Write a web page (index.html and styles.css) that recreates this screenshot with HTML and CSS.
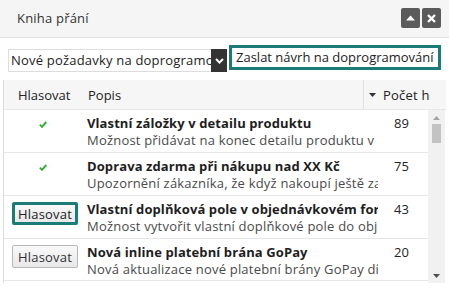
FILE: index.html
```html
<!DOCTYPE html>
<html lang="cs">

<head>
    <meta charset="UTF-8">
    <title>Kniha přání</title>
    <link rel="stylesheet" href="styles.css">
</head>

<body>
    <div class="titlebar">
        <span class="title">Kniha přání</span>
        <div class="tools">
            <span class="tool">
                <svg width="9" height="6" viewBox="0 0 9 6"><path d="M0 5.5 L4.5 0.5 L9 5.5 Z" fill="#fff"/></svg>
            </span>
            <span class="tool">
                <svg width="9" height="9" viewBox="0 0 9 9"><path d="M1 1 L8 8 M8 1 L1 8" stroke="#fff" stroke-width="2.4"/></svg>
            </span>
        </div>
    </div>

    <div class="filters">
        <div class="select">
            <span class="select-text">Nové požadavky na doprogramování</span>
            <span class="select-arrow">
                <svg width="9" height="6" viewBox="0 0 9 6"><path d="M1 1 L4.5 4.5 L8 1" stroke="#fff" stroke-width="2" fill="none"/></svg>
            </span>
        </div>
        <div class="propose">Zaslat návrh na doprogramování</div>
    </div>

    <div class="grid">
        <div class="grid-head">
            <div class="hcol col-vote">Hlasovat</div>
            <div class="hcol col-desc">Popis</div>
            <div class="hcol col-count">
                <svg width="7" height="4" viewBox="0 0 7 4"><path d="M0 0 L7 0 L3.5 4 Z" fill="#333"/></svg>
                <span class="hcount">Počet hlasů</span>
            </div>
        </div>
        <div class="grid-body">
            <div class="rows">
                <div class="row">
                    <div class="cell col-vote">
                        <svg class="check" width="8" height="7" viewBox="0 0 8 7"><path d="M0.8 3.6 L3 5.8 L7.2 1" stroke="#2fae2f" stroke-width="1.9" fill="none"/></svg>
                    </div>
                    <div class="cell col-desc">
                        <div class="name">Vlastní záložky v detailu produktu</div>
                        <div class="note">Možnost přidávat na konec detailu produktu v extra záložkách</div>
                    </div>
                    <div class="cell col-count">89</div>
                </div>
                <div class="row">
                    <div class="cell col-vote">
                        <svg class="check" width="8" height="7" viewBox="0 0 8 7"><path d="M0.8 3.6 L3 5.8 L7.2 1" stroke="#2fae2f" stroke-width="1.9" fill="none"/></svg>
                    </div>
                    <div class="cell col-desc">
                        <div class="name">Doprava zdarma při nákupu nad XX Kč</div>
                        <div class="note">Upozornění zákazníka, že když nakoupí ještě za XX Kč</div>
                    </div>
                    <div class="cell col-count">75</div>
                </div>
                <div class="row">
                    <div class="cell col-vote"><button class="vote focused">Hlasovat</button></div>
                    <div class="cell col-desc">
                        <div class="name">Vlastní doplňková pole v objednávkovém formuláři</div>
                        <div class="note">Možnost vytvořit vlastní doplňkové pole do obj .</div>
                    </div>
                    <div class="cell col-count">43</div>
                </div>
                <div class="row">
                    <div class="cell col-vote"><button class="vote">Hlasovat</button></div>
                    <div class="cell col-desc">
                        <div class="name">Nová inline platební brána GoPay</div>
                        <div class="note">Nová aktualizace nové platební brány GoPay díky</div>
                    </div>
                    <div class="cell col-count">20</div>
                </div>
            </div>
            <div class="scrollbar">
                <svg width="7" height="4" viewBox="0 0 7 4"><path d="M0 4 L7 4 L3.5 0 Z" fill="#a3a3a3"/></svg>
                <div class="thumb"></div>
                <div class="track"></div>
                <svg width="7" height="4" viewBox="0 0 7 4"><path d="M0 0 L7 0 L3.5 4 Z" fill="#505050"/></svg>
            </div>
        </div>
    </div>
</body>

</html>
```

FILE: styles.css
```css
* {
    margin: 0;
    padding: 0;
    box-sizing: border-box;
}

body {
    width: 449px;
    height: 291px;
    overflow: hidden;
    background: #fff;
    font-family: "Open Sans", "Liberation Sans", sans-serif;
    font-size: 13px;
    color: #222;
}

/* titulek okna */
.titlebar {
    height: 38px;
    background: #f5f5f5;
    border-bottom: 1px solid #e4e4e4;
    display: flex;
    align-items: center;
    justify-content: space-between;
    padding: 0 8px 1px 17px;
}

.title {
    font-size: 13px;
    color: #333;
    letter-spacing: 0.2px;
}

.tools {
    display: flex;
    gap: 2px;
}

.tool {
    width: 19px;
    height: 20px;
    background: #5b5b5b;
    border-radius: 2px;
    display: flex;
    align-items: center;
    justify-content: center;
}

/* filtry */
.filters {
    display: flex;
    align-items: flex-start;
    padding: 7px 8px 0 8px;
    height: 42px;
}

.select {
    margin-top: 4px;
    width: 219px;
    height: 23px;
    display: flex;
}

.select-text {
    flex: 1;
    border: 1px solid #ddd;
    border-right: 0;
    padding: 0 2px;
    line-height: 21px;
    white-space: nowrap;
    overflow: hidden;
    font-size: 13px;
    letter-spacing: 0.2px;
    color: #222;
}

.select-arrow {
    width: 16px;
    background: #333;
    display: flex;
    align-items: center;
    justify-content: center;
}

.propose {
    margin-left: 2px;
    width: 212px;
    height: 25px;
    border: 3px solid #1b7b78;
    padding: 0 4px;
    line-height: 19px;
    font-size: 13px;
    white-space: nowrap;
    overflow: hidden;
    color: #222;
}

/* tabulka */
.grid {
    margin-left: 3px;
    width: 443px;
    border-left: 1px solid #dcdcdc;
}

.grid-head {
    display: flex;
    height: 30px;
    background: #f6f6f6;
    border-bottom: 1px solid #e8e8e8;
}

.hcol {
    display: flex;
    align-items: center;
    white-space: nowrap;
    overflow: hidden;
}

.grid-head .col-vote {
    width: 76px;
    padding-left: 14px;
}

.grid-head .col-desc {
    width: 283px;
    padding-left: 8px;
}

.grid-head .col-count {
    flex: 1;
    border-left: 1px solid #e2e2e2;
    padding-left: 5px;
    gap: 7px;
}

.hcount {
    width: 47px;
    overflow: hidden;
    letter-spacing: 0.2px;
}

.grid-body {
    display: flex;
}

.rows {
    width: 424px;
}

.row {
    display: flex;
    height: 43px;
    border-bottom: 1px solid #e6e6e6;
}

.row:last-child {
    height: 42px;
}

.cell {
    padding-top: 5px;
    line-height: 17px;
    overflow: hidden;
    white-space: nowrap;
}

.row .col-vote {
    width: 78px;
    text-align: center;
}

.row .col-desc {
    width: 296px;
    padding-left: 5px;
}

.row .col-count {
    flex: 1;
    padding-left: 16px;
}

.name {
    font-weight: bold;
    letter-spacing: 0.1px;
    color: #1e1e1e;
}

.note {
    color: #4a4a4a;
    letter-spacing: 0.2px;
}

.check {
    margin-top: 6px;
}

.vote {
    margin-top: 1px;
    margin-left: 4px;
    width: 66px;
    height: 23px;
    border: 1px solid #b8b8b8;
    border-radius: 2px;
    background: linear-gradient(#f9f9f9, #e8e8e8);
    font-family: "Open Sans", "Liberation Sans", sans-serif;
    font-size: 13px;
    letter-spacing: 0.2px;
    color: #333;
}

.vote.focused {
    border: 3px solid #1b7b78;
    color: #222;
}

.scrollbar {
    width: 17px;
    height: 173px;
    background: #f1f1f1;
    display: flex;
    flex-direction: column;
    align-items: center;
    padding: 6px 0 5px;
}

.thumb {
    margin-top: 4px;
    width: 9px;
    height: 19px;
    background: #c3c3c3;
}

.track {
    flex: 1;
}
```
